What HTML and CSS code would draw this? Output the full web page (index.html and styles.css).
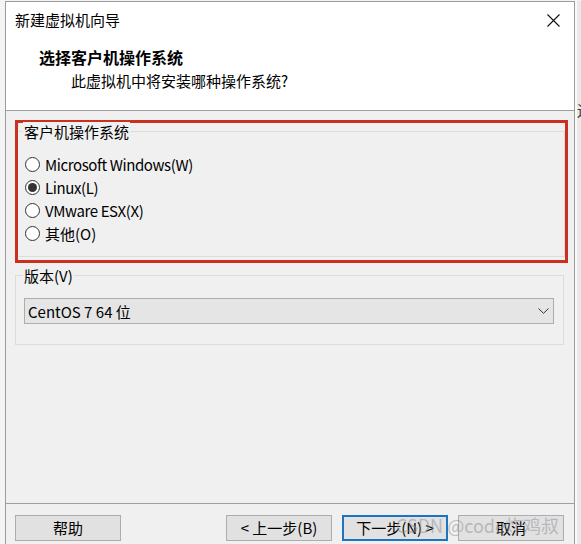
FILE: index.html
```html
<!DOCTYPE html>
<html lang="zh-CN">
<head>
<meta charset="utf-8">
<title>新建虚拟机向导</title>
<link rel="stylesheet" href="styles.css">
</head>
<body>
<div class="screen">
  <div class="window">
    <div class="titlebar">
      <span class="title">新建虚拟机向导</span>
      <svg class="close" width="13" height="13" viewBox="0 0 13 13"><path d="M0.5 0.5 L12.5 12.5 M12.5 0.5 L0.5 12.5" stroke="#111" stroke-width="1.1" fill="none"/></svg>
    </div>
    <div class="header">
      <div class="h-title">选择客户机操作系统</div>
      <div class="h-sub">此虚拟机中将安装哪种操作系统?</div>
    </div>
    <div class="content">
      <div class="highlight">
        <div class="group os-group">
          <div class="group-label">客户机操作系统</div>
          <div class="radios">
            <div class="radio-row"><span class="radio"></span><span class="latin">Microsoft Windows(W)</span></div>
            <div class="radio-row"><span class="radio checked"></span><span class="latin">Linux(L)</span></div>
            <div class="radio-row"><span class="radio"></span><span class="latin">VMware ESX(X)</span></div>
            <div class="radio-row"><span class="radio"></span><span>其他(O)</span></div>
          </div>
        </div>
      </div>
      <div class="group version-group">
        <div class="group-label">版本(V)</div>
        <div class="select">
          <span>CentOS 7 64 位</span>
          <svg class="chev" width="11" height="6" viewBox="0 0 11 6"><path d="M0.5 0.5 L5.5 5.3 L10.5 0.5" stroke="#333" stroke-width="1" fill="none"/></svg>
        </div>
      </div>
    </div>
    <div class="footer">
      <button class="btn">帮助</button>
      <div class="btn-group">
        <button class="btn">&lt; 上一步(B)</button>
        <button class="btn default">下一步(N) &gt;</button>
        <button class="btn">取消</button>
      </div>
    </div>
  </div>
  <div class="side"><span class="side-char">运</span></div>
  <div class="watermark">CSDN @code炸鸡叔</div>
</div>
</body>
</html>
```

FILE: styles.css
```css
html, body {
  margin: 0;
  padding: 0;
  background: #f4f4f4;
  font-family: "Noto Sans CJK SC", "Noto Sans", sans-serif;
  color: #000;
}
.screen {
  position: relative;
  display: flex;
  width: 581px;
  height: 544px;
  overflow: hidden;
  padding: 1px 0 0 5px;
  box-sizing: border-box;
}
.window {
  width: 570px;
  height: 560px;
  flex: none;
  border: 1px solid #9c9c9c;
  box-sizing: border-box;
  display: flex;
  flex-direction: column;
  background: #f0f0f0;
}
.titlebar {
  height: 36px;
  flex: none;
  background: #fff;
  display: flex;
  align-items: center;
  justify-content: space-between;
  padding: 0 14px 0 9px;
  font-size: 15px;
}
.title { line-height: 20px; }
.header {
  flex: none;
  background: #fff;
  border-bottom: 1px solid #a0a0a0;
  padding-top: 9px;
  box-sizing: content-box;
  height: 63px;
}
.h-title {
  font-size: 16px;
  font-weight: bold;
  line-height: 20px;
  padding-left: 33px;
}
.h-sub {
  font-size: 15px;
  line-height: 20px;
  margin-top: 4px;
  padding-left: 65px;
}
.content {
  height: 392px;
  flex: none;
  padding: 9px 0 0 9px;
  box-sizing: border-box;
  font-size: 15px;
}
.highlight {
  width: 553px;
  border: 3px solid #c9301f;
  box-sizing: border-box;
  padding: 8px 0 3px 0;
}
.group {
  border: 1px solid #dcdcdc;
}
.group-label {
  width: fit-content;
  line-height: 20px;
  margin-top: -10px;
  padding: 0 1px;
  background: #f0f0f0;
}
.os-group {
  border-left-color: transparent;
}
.os-group .group-label { margin-left: 4px; }
.radios {
  margin-top: 11px;
  padding: 0 0 11px 6px;
}
.radio-row {
  height: 23px;
  display: flex;
  align-items: center;
  gap: 5px;
}
.latin { letter-spacing: -0.4px; }
.radio {
  width: 15px;
  height: 15px;
  border: 1px solid #333;
  border-radius: 50%;
  background: #fff;
  box-sizing: border-box;
  display: flex;
  align-items: center;
  justify-content: center;
}
.radio.checked::after {
  content: "";
  width: 9px;
  height: 9px;
  border-radius: 50%;
  background: #333;
}
.version-group {
  width: 549px;
  box-sizing: border-box;
  margin-top: 12px;
  padding: 0 9px 20px 8px;
}
.version-group .group-label { margin-left: -1px; }
.select {
  margin-top: 12px;
  height: 26px;
  border: 1px solid #adadad;
  background: #e5e5e5;
  box-sizing: border-box;
  display: flex;
  align-items: center;
  justify-content: space-between;
  padding: 0 4px 0 3px;
}
.footer {
  flex: 1;
  border-top: 1px solid #a0a0a0;
  display: flex;
  align-items: flex-start;
  justify-content: space-between;
  padding: 11px 10px 0 9px;
}
.btn-group {
  display: flex;
  gap: 10px;
}
.btn {
  width: 106px;
  height: 26px;
  border: 1px solid #adadad;
  background: #e1e1e1;
  font-family: "Noto Sans CJK SC", "Noto Sans", sans-serif;
  font-size: 15px;
  color: #000;
  padding: 0;
  line-height: 22px;
  box-sizing: border-box;
}
.btn.default {
  border: 2px solid #1f74bf;
}
.side {
  flex: 1;
  background: #e9e9e9;
  border-left: 2px solid #fafafa;
  position: relative;
}
.side-char {
  position: absolute;
  left: 0;
  top: 98px;
  font-size: 15px;
  color: #333;
}
.watermark {
  position: absolute;
  left: 396px;
  top: 512px;
  font-size: 18px;
  line-height: 26px;
  color: rgba(140, 140, 150, 0.5);
  white-space: nowrap;
  pointer-events: none;
}
```
